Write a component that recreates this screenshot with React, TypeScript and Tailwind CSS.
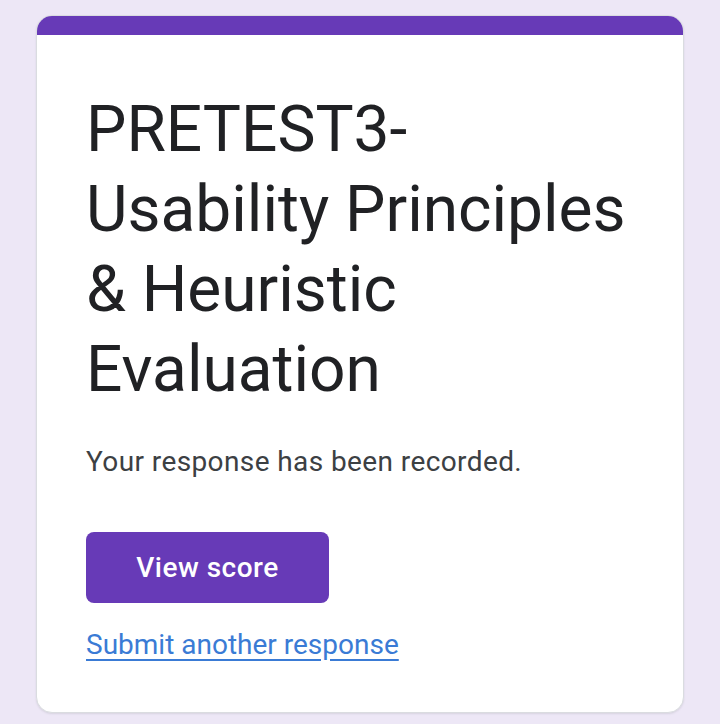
export default function App() {
  return (
    <div
      className="min-h-[724px] w-full bg-[#ede7f6] px-[36px] pt-[15px] pb-[11px]"
      style={{ fontFamily: "Roboto, 'Liberation Sans', sans-serif" }}
    >
      <div className="overflow-hidden rounded-[16px] border border-[#dadce0] bg-white shadow-[0_1px_2px_rgba(60,64,67,0.12)]">
        {/* Theme strip */}
        <div className="-mx-px -mt-px h-[20px] bg-[#673ab7]" />

        <div className="px-[49px] pt-[55px] pb-[47px]">
          <h1 className="text-[64px] leading-[80px] font-normal text-[#202124]">
            PRETEST3-
            <br />
            Usability Principles &amp; Heuristic Evaluation
          </h1>

          <p className="mt-[32px] text-[28px] leading-[40px] tracking-[0.4px] text-[#3c4043]">
            Your response has been recorded.
          </p>

          <button
            type="button"
            className="mt-[50px] flex h-[71px] w-[243px] items-center justify-center rounded-[8px] bg-[#673ab7] text-[28px] font-medium tracking-[0.5px] text-white"
          >
            View score
          </button>

          <a
            href="#"
            className="mt-[22px] block w-fit text-[28px] leading-[40px] text-[#3a7bd5] underline underline-offset-[5px]"
          >
            Submit another response
          </a>
        </div>
      </div>
    </div>
  );
}
